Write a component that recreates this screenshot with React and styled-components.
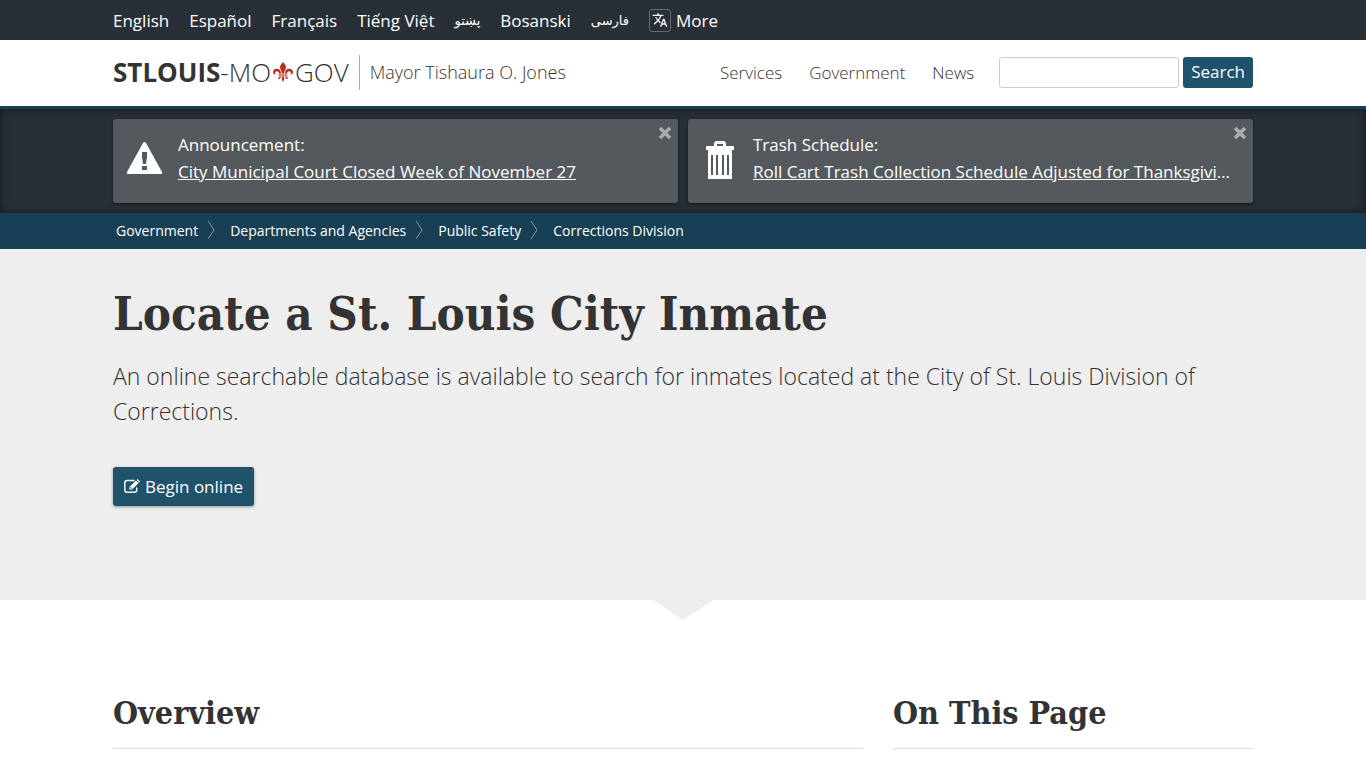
import React from "react"
import styled, { createGlobalStyle } from "styled-components"
import { MdTranslate } from "react-icons/md"

const languages = [
  { label: "English", lang: "en" },
  { label: "Español", lang: "es" },
  { label: "Français", lang: "fr" },
  { label: "Tiếng Việt", lang: "vi" },
  { label: "پښتو", lang: "ps", rtl: true },
  { label: "Bosanski", lang: "bs" },
  { label: "فارسی", lang: "fa", rtl: true },
]

const crumbs = [
  "Government",
  "Departments and Agencies",
  "Public Safety",
  "Corrections Division",
]

const FleurDeLis = () => (
  <svg width="20" height="20" viewBox="0 0 20 20" fill="#b92e22" aria-hidden="true">
    <path d="M10 0C11.200 1.600 13 3 13 5.200 13 7.200 11.200 8.800 11 11.800H9C8.800 8.800 7 7.200 7 5.200 7 3 8.800 1.600 10 0Z" />
    <path d="M8 11.800C8 8.600 6.300 6.800 3.800 6.800 1.500 6.800 0 8.200 0 10 0 11.600 1.200 12.600 2.600 12.400 2 11.400 2 10.600 2.400 10 3 9.100 4.300 9 5.200 9.800 5.900 10.400 6.100 11.200 6.100 11.800Z" />
    <path d="M12 11.800C12 8.600 13.700 6.800 16.200 6.800 18.500 6.800 20 8.200 20 10 20 11.600 18.800 12.600 17.400 12.400 18 11.400 18 10.600 17.600 10 17 9.100 15.700 9 14.800 9.800 14.100 10.400 13.900 11.200 13.900 11.800Z" />
    <path d="M5.500 12.500H14.500V13.600H5.500Z" />
    <path d="M9.200 14.200H10.800L11.200 17.500 10 20 8.800 17.500ZM6.600 14.200H8C7.800 15.900 7 17 5.700 17 5 16.900 4.700 16.200 5.200 15.600 6 15.800 6.500 15.200 6.600 14.200ZM13.400 14.200H12C12.200 15.900 13 17 14.300 17 15 16.900 15.300 16.200 14.800 15.600 14 15.800 13.500 15.200 13.400 14.200Z" />
  </svg>
)

const WarningIcon = () => (
  <svg width="36" height="36" viewBox="0 0 36 36" fill="#fff" aria-hidden="true">
    <path
      fillRule="evenodd"
      d="M16 1Q17.500 -1 19 1L35 30Q35.500 32 34 32H1Q-.5 32 0 30ZM15 10V15L16 22H19L20 15V10ZM15 24V28H20V24Z"
    />
  </svg>
)

const TrashIcon = () => (
  <svg width="28" height="38" viewBox="0 0 28 38" fill="#fff" aria-hidden="true">
    <path
      fillRule="evenodd"
      d="M8 5V3Q8 0 11 0H17Q20 0 20 3V5H27Q28 5 28 6V9H26V38H2V9H0V6Q0 5 1 5ZM11 5H17V3H11ZM5 14V34H7V14ZM10 14V34H12V14ZM16 14V34H18V14ZM21 14V34H23V14Z"
    />
  </svg>
)

const CloseIcon = () => (
  <svg width="14" height="14" viewBox="0 0 14 14" aria-hidden="true">
    <path d="M2 2L12 12M12 2L2 12" stroke="#aaacae" strokeWidth="3.600" />
  </svg>
)

const EditIcon = () => (
  <svg width="16" height="14" viewBox="0 0 16 14" aria-hidden="true">
    <path
      d="M10.500 1.500H3Q.8 1.500 .8 3.700V11Q.8 13.200 3 13.200H10.500Q12.700 13.200 12.700 11V8.500"
      fill="none"
      stroke="#fff"
      strokeWidth="1.400"
    />
    <path
      fillRule="evenodd"
      fill="#fff"
      d="M12 1.400L14.600 4 8 10.600H5.400V8ZM12.600.8L13 .4Q13.500 0 14 .4L15.600 2Q16 2.500 15.600 3L15.200 3.400ZM6.200 8.400V9.100H6.900V9.800H7.600L8.100 9.300 6.700 7.900Z"
    />
  </svg>
)

const Chevron = () => (
  <svg width="8" height="20" viewBox="0 0 8 20" fill="none" aria-hidden="true">
    <path d="M1 1L7 10L1 19" stroke="#7e97a4" />
  </svg>
)

const Alert = ({ icon, title, text }) => (
  <AlertBox>
    <AlertIcon>{icon}</AlertIcon>
    <AlertText>
      <div>{title}</div>
      <AlertLine>
        <a href="#">{text}</a>
      </AlertLine>
    </AlertText>
    <CloseButton type="button" aria-label="Close">
      <CloseIcon />
    </CloseButton>
  </AlertBox>
)

const App = () => {
  return (
    <>
      <GlobalStyle />
      <LanguageBar>
        <LanguageList aria-label="Languages">
          {languages.map(({ label, lang, rtl }) => (
            <LanguageLink key={lang} href="#" lang={lang} $rtl={rtl}>
              {label}
            </LanguageLink>
          ))}
          <MoreLink href="#">
            <TranslateBox>
              <MdTranslate size={16} />
            </TranslateBox>
            More
          </MoreLink>
        </LanguageList>
      </LanguageBar>

      <Header>
        <HeaderInner>
          <Logo href="#">
            <strong>STLOUIS</strong>-MO
            <FleurDeLis />
            GOV
          </Logo>
          <Mayor href="#">Mayor Tishaura O. Jones</Mayor>
          <MainNav>
            <a href="#">Services</a>
            <a href="#">Government</a>
            <a href="#">News</a>
          </MainNav>
          <SearchForm onSubmit={(e) => e.preventDefault()}>
            <input type="search" name="q" aria-label="Search" />
            <button>Search</button>
          </SearchForm>
        </HeaderInner>
      </Header>

      <AlertBar>
        <AlertGrid>
          <Alert
            icon={<WarningIcon />}
            title="Announcement:"
            text="City Municipal Court Closed Week of November 27"
          />
          <Alert
            icon={<TrashIcon />}
            title="Trash Schedule:"
            text="Roll Cart Trash Collection Schedule Adjusted for Thanksgiving Holiday"
          />
        </AlertGrid>
      </AlertBar>

      <CrumbBar aria-label="Breadcrumb">
        <CrumbList>
          {crumbs.map((crumb, i) => (
            <li key={crumb}>
              <a href="#">{crumb}</a>
              {i < crumbs.length - 1 && <Chevron />}
            </li>
          ))}
        </CrumbList>
      </CrumbBar>

      <main>
        <Hero>
          <Container>
            <h1>Locate a St. Louis City Inmate</h1>
            <p>
              An online searchable database is available to search for inmates
              located at the City of St. Louis Division of Corrections.
            </p>
            <BeginButton type="button">
              <EditIcon />
              Begin online
            </BeginButton>
          </Container>
        </Hero>
        <Content>
          <SectionTitle>Overview</SectionTitle>
          <SectionTitle>On This Page</SectionTitle>
        </Content>
      </main>
    </>
  )
}

export default App

const GlobalStyle = createGlobalStyle`
  *,
  *::before,
  *::after {
    box-sizing: border-box;
  }
  body {
    margin: 0;
    background: #fff;
    color: #333;
    font-family: "Open Sans", "Noto Sans", sans-serif;
    font-size: 17px;
  }
  a {
    color: inherit;
    text-decoration: none;
  }
  svg {
    display: block;
    flex-shrink: 0;
  }
`

const Container = styled.div`
  width: 100%;
  max-width: 1140px;
  margin: 0 auto;
`

const LanguageBar = styled.div`
  background: #292f37;
  color: #fff;
`

const LanguageList = styled(Container).attrs({ as: "nav" })`
  display: flex;
  align-items: center;
  gap: 20px;
  height: 40px;
`

const LanguageLink = styled.a`
  font-family: ${({ $rtl }) =>
    $rtl ? `"DejaVu Sans", sans-serif` : `"Open Sans", sans-serif`};
  font-size: ${({ $rtl }) => ($rtl ? "13px" : "17px")};
`

const MoreLink = styled.a`
  display: flex;
  align-items: center;
  gap: 5px;
`

const TranslateBox = styled.span`
  display: flex;
  align-items: center;
  justify-content: center;
  width: 22px;
  height: 23px;
  border: 1px solid #666a70;
  border-radius: 3px;
`

const Header = styled.header`
  border-bottom: 3px solid #183f54;
`

const HeaderInner = styled(Container)`
  display: flex;
  align-items: center;
  height: 66px;
  padding-bottom: 2px;
`

const Logo = styled.a`
  display: flex;
  align-items: center;
  padding-right: 10px;
  border-right: 1px solid #aaa;
  font-size: 26px;
  line-height: 35px;
  font-weight: 300;
  strong {
    font-weight: 700;
  }
  svg {
    margin: 0 2px;
  }
`

const Mayor = styled.a`
  margin-left: 10px;
  font-size: 18px;
  font-weight: 300;
`

const MainNav = styled.nav`
  display: flex;
  gap: 27px;
  margin-left: auto;
  font-weight: 300;
`

const SearchForm = styled.form`
  display: flex;
  gap: 4px;
  margin-left: 25px;
  input {
    width: 180px;
    height: 31px;
    padding: 0 8px;
    border: 1px solid #ccc;
    border-radius: 3px;
    font: inherit;
  }
  button {
    height: 31px;
    padding: 0 8px 1px;
    border: 0;
    border-radius: 3px;
    background: #1f526b;
    color: #fff;
    font: inherit;
  }
`

const AlertBar = styled.div`
  padding: 10px 0;
  background: #292f37;
  box-shadow: inset 0 0 10px rgba(0, 0, 0, 0.5);
`

const AlertGrid = styled(Container)`
  display: grid;
  grid-template-columns: repeat(2, minmax(0, 1fr));
  gap: 10px;
`

const AlertBox = styled.section`
  position: relative;
  display: flex;
  height: 84px;
  padding: 12px 22px 0 14px;
  background: #54595d;
  border-radius: 3px;
  box-shadow: 0 1px 3px rgba(0, 0, 0, 0.5);
  color: #fff;
`

const AlertIcon = styled.div`
  display: flex;
  justify-content: center;
  align-items: center;
  flex-shrink: 0;
  width: 36px;
  height: 58px;
`

const AlertText = styled.div`
  min-width: 0;
  margin-left: 15px;
  line-height: 27px;
`

const AlertLine = styled.div`
  overflow: hidden;
  white-space: nowrap;
  text-overflow: ellipsis;
  a {
    text-decoration: underline;
  }
`

const CloseButton = styled.button`
  position: absolute;
  top: 7px;
  right: 6px;
  padding: 0;
  border: 0;
  background: none;
`

const CrumbBar = styled.nav`
  background: #183f54;
  color: #fff;
`

const CrumbList = styled(Container).attrs({ as: "ol" })`
  display: flex;
  align-items: center;
  height: 36px;
  padding: 0 3px 2px;
  list-style: none;
  font-size: 14px;
  li {
    display: flex;
    align-items: center;
    gap: 9px;
    margin-right: 15px;
  }
`

const Hero = styled.section`
  position: relative;
  padding: 30px 0 94px;
  background: #eee;
  &::after {
    content: "";
    position: absolute;
    top: 100%;
    left: 50%;
    margin-left: -30px;
    border: 30px solid transparent;
    border-width: 20px 30px 0;
    border-top-color: #eee;
  }
  h1 {
    margin: 0;
    font-family: "DejaVu Serif Condensed", "DejaVu Serif", serif;
    font-size: 47px;
    line-height: 70px;
    font-weight: 700;
  }
  p {
    margin: 10px 0 38px;
    font-size: 23px;
    line-height: 35px;
    font-weight: 300;
  }
`

const BeginButton = styled.button`
  display: flex;
  align-items: center;
  gap: 5px;
  height: 39px;
  padding: 0 11px 1px;
  border: 0;
  border-radius: 3px;
  background: #1f526b;
  box-shadow: 0 1px 3px rgba(0, 0, 0, 0.4);
  color: #fff;
  font: inherit;
`

const Content = styled(Container)`
  display: grid;
  grid-template-columns: minmax(0, 25fr) minmax(0, 12fr);
  gap: 30px;
  padding-top: 88px;
`

const SectionTitle = styled.h2`
  margin: 0;
  padding-bottom: 10px;
  border-bottom: 1px solid #ddd;
  font-family: "DejaVu Serif Condensed", "DejaVu Serif", serif;
  font-size: 32px;
  line-height: 50px;
  font-weight: 700;
`
